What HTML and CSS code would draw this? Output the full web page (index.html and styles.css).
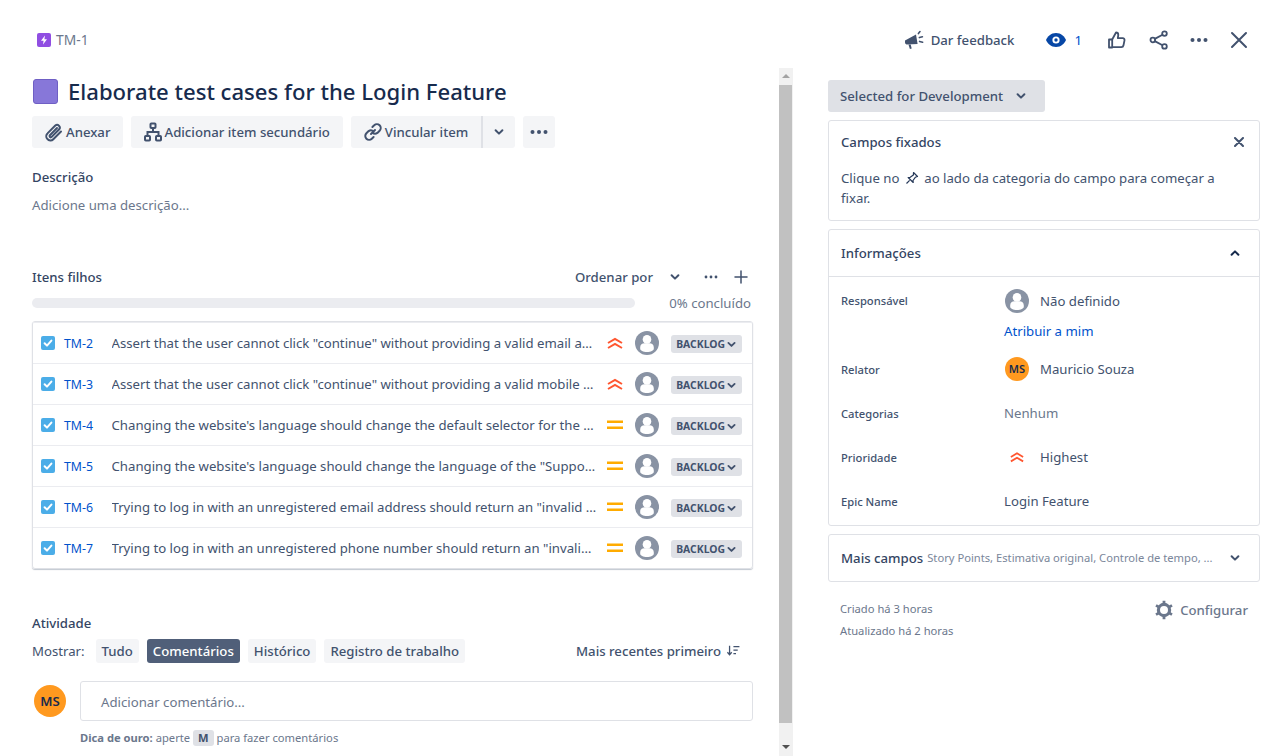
FILE: index.html
```html
<!DOCTYPE html>
<html lang="pt-BR">
<head>
<meta charset="utf-8">
<title>TM-1</title>
<link rel="stylesheet" href="styles.css">
</head>
<body>
<svg class="defs" width="0" height="0" aria-hidden="true">
  <defs>
    <symbol id="user" viewBox="0 0 24 24">
      <circle cx="12" cy="12" r="12" fill="#8993a4"/>
      <circle cx="12" cy="8.4" r="4.300" fill="#fff"/>
      <path d="M5.200 16.200c0-2.600 2-4 4.200-4h5.200c2.200 0 4.200 1.400 4.200 4v1.600c0 1.800-3 3.200-6.800 3.200s-6.800-1.400-6.800-3.200z" fill="#fff"/>
    </symbol>
    <symbol id="highest" viewBox="0 0 16 16">
      <path d="M1 8 8 3.800 15 8M1 13 8 8.800 15 13" fill="none" stroke="#ff5630" stroke-width="2"/>
    </symbol>
    <symbol id="medium" viewBox="0 0 16 16">
      <path d="M0 3.500h16v2.600H0zM0 9.500h16v2.600H0z" fill="#ffab00"/>
    </symbol>
    <symbol id="chev" viewBox="0 0 12 12">
      <path d="M2.600 4.200 6 7.600l3.400-3.400" fill="none" stroke="currentColor" stroke-width="2" stroke-linecap="round" stroke-linejoin="round"/>
    </symbol>
    <symbol id="check" viewBox="0 0 14 14">
      <rect width="14" height="14" rx="2" fill="#4bade8"/>
      <path d="m3.600 7.200 2.400 2.400 4.400-5" fill="none" stroke="#fff" stroke-width="2" stroke-linecap="round" stroke-linejoin="round"/>
    </symbol>
  </defs>
</svg>

<div class="app">
  <header class="topbar">
    <div class="crumb">
      <svg class="ico14" viewBox="0 0 14 14"><rect width="14" height="14" rx="2" fill="#904ee2"/><path d="M8 2.600 4 7.800h2.600L6 11.400l4-5.200H7.400z" fill="#fff"/></svg>
      <span>TM-1</span>
    </div>
    <div class="actions">
      <button class="act feedback">
        <svg class="ico22" viewBox="0 0 22 22"><path d="M2 11.500 13 5.500l1.600 9.600L3.600 15.400a1.900 1.900 0 0 1-1.600-1.900z" fill="#42526e"/><path d="m5.500 15.600 1.400 4.400 1.800-.6-1-3.800z" fill="#42526e"/><path d="M15.400 4.600 17 2.600M16.400 8.600l3-.8M16.600 12.400l3 .8" stroke="#42526e" stroke-width="1.600" stroke-linecap="round"/></svg>
        <span>Dar feedback</span>
      </button>
      <button class="act watch">
        <svg class="ico-eye" viewBox="0 0 20 14"><path d="M10 0c5 0 8.600 3.600 10 7-1.400 3.400-5 7-10 7S1.400 10.400 0 7c1.400-3.400 5-7 10-7z" fill="#0747a6"/><circle cx="10" cy="7" r="3.600" fill="#fff"/><circle cx="10" cy="7" r="1.700" fill="#0747a6"/></svg>
        <span>1</span>
      </button>
      <button class="act icon like">
        <svg class="ico22" viewBox="0 0 22 22" fill="none" stroke="#42526e" stroke-width="1.800" stroke-linejoin="round"><path d="M3 10.500h3.200v8H3z"/><path d="M6.200 10.500 10 3.500c1.600 0 2.300 1 2.300 2.400l-.5 3.300h5c1.200 0 1.900 1 1.700 2.100l-1 5c-.2 1.100-1 1.800-2.100 1.800H6.200"/></svg>
      </button>
      <button class="act icon">
        <svg class="ico22" viewBox="0 0 22 22" fill="none" stroke="#42526e" stroke-width="1.800"><circle cx="16.500" cy="4.600" r="2.300"/><circle cx="4.800" cy="11" r="2.300"/><circle cx="16.500" cy="17.400" r="2.300"/><path d="m6.800 9.900 7.700-4.200M6.800 12.100l7.700 4.200"/></svg>
      </button>
      <button class="act icon">
        <svg class="ico22" viewBox="0 0 22 22" fill="#42526e"><circle cx="4.500" cy="11" r="2"/><circle cx="11" cy="11" r="2"/><circle cx="17.500" cy="11" r="2"/></svg>
      </button>
      <button class="act icon">
        <svg class="ico22" viewBox="0 0 22 22" fill="none" stroke="#42526e" stroke-width="2" stroke-linecap="round"><path d="m4 4 14 14M18 4 4 18"/></svg>
      </button>
    </div>
  </header>

  <div class="main">
    <main class="left">
      <div class="title-row">
        <span class="epic"></span>
        <h1>Elaborate test cases for the Login Feature</h1>
      </div>
      <div class="toolbar">
        <button class="btn">
          <svg class="ico20" viewBox="0 0 20 20" fill="none" stroke="#42526e" stroke-width="2" stroke-linecap="round"><path d="M17 9.500 9.300 17.200a3.900 3.900 0 0 1-6-.3 3.900 3.900 0 0 1 .2-5.500l7.800-7.800a2.700 2.700 0 0 1 3.900 3.700l-7.500 7.600a1.200 1.200 0 0 1-1.800-1.700L13 6"/></svg>
          Anexar
        </button>
        <button class="btn wide">
          <svg class="ico20" viewBox="0 0 20 20" fill="none" stroke="#42526e" stroke-width="2"><rect x="7.500" y="1.500" width="5" height="4.500" rx=".8"/><rect x="2" y="14" width="5" height="4.500" rx=".8"/><rect x="13" y="14" width="5" height="4.500" rx=".8"/><path d="M10 6v4M4.500 14v-4h11v4"/></svg>
          Adicionar item secundário
        </button>
        <div class="split">
          <button class="btn seg-a">
            <svg class="ico20" viewBox="0 0 20 20" fill="none" stroke="#42526e" stroke-width="2" stroke-linecap="round"><path d="m8 12 4-4M9.400 5l1.800-1.700a3.800 3.800 0 0 1 5.400 5.400l-2.200 2.200a3.800 3.800 0 0 1-5-.4M10.600 15l-1.800 1.700a3.800 3.800 0 0 1-5.400-5.400l2.200-2.200a3.800 3.800 0 0 1 5 .4"/></svg>
            Vincular item
          </button>
          <button class="btn seg-b"><svg class="ico12" aria-hidden="true"><use href="#chev"/></svg></button>
        </div>
        <button class="btn more">
          <svg class="ico20" viewBox="0 0 20 20" fill="#42526e"><circle cx="3.500" cy="10" r="2"/><circle cx="10" cy="10" r="2"/><circle cx="16.500" cy="10" r="2"/></svg>
        </button>
      </div>

      <h2 class="label desc-label">Descrição</h2>
      <p class="placeholder">Adicione uma descrição...</p>

      <div class="child-head">
        <h2 class="label">Itens filhos</h2>
        <div class="child-tools">
          <span class="sort">Ordenar por</span>
          <svg class="ico12" aria-hidden="true"><use href="#chev"/></svg>
          <svg class="ico-dots" viewBox="0 0 14 4" fill="#42526e"><circle cx="2" cy="2" r="1.400"/><circle cx="7" cy="2" r="1.400"/><circle cx="12" cy="2" r="1.400"/></svg>
          <svg class="ico-plus" viewBox="0 0 14 14" stroke="#42526e" stroke-width="1.500" stroke-linecap="round"><path d="M7 1v12M1 7h12"/></svg>
        </div>
      </div>
      <div class="progress">
        <div class="bar"></div>
        <span>0% concluído</span>
      </div>

      <ul class="children">
        <li class="child">
          <svg class="ico14"><use href="#check"/></svg><a class="key">TM-2</a>
          <span class="summary">Assert that the user cannot click "continue" without providing a valid email address</span>
          <svg class="prio"><use href="#highest"/></svg><svg class="av"><use href="#user"/></svg>
          <span class="lozenge">BACKLOG<svg class="ico11"><use href="#chev"/></svg></span>
        </li>
        <li class="child">
          <svg class="ico14"><use href="#check"/></svg><a class="key">TM-3</a>
          <span class="summary">Assert that the user cannot click "continue" without providing a valid mobile phone number</span>
          <svg class="prio"><use href="#highest"/></svg><svg class="av"><use href="#user"/></svg>
          <span class="lozenge">BACKLOG<svg class="ico11"><use href="#chev"/></svg></span>
        </li>
        <li class="child">
          <svg class="ico14"><use href="#check"/></svg><a class="key">TM-4</a>
          <span class="summary">Changing the website's language should change the default selector for the phone prefix</span>
          <svg class="prio"><use href="#medium"/></svg><svg class="av"><use href="#user"/></svg>
          <span class="lozenge">BACKLOG<svg class="ico11"><use href="#chev"/></svg></span>
        </li>
        <li class="child">
          <svg class="ico14"><use href="#check"/></svg><a class="key">TM-5</a>
          <span class="summary">Changing the website's language should change the language of the "Support" page link</span>
          <svg class="prio"><use href="#medium"/></svg><svg class="av"><use href="#user"/></svg>
          <span class="lozenge">BACKLOG<svg class="ico11"><use href="#chev"/></svg></span>
        </li>
        <li class="child">
          <svg class="ico14"><use href="#check"/></svg><a class="key">TM-6</a>
          <span class="summary">Trying to log in with an unregistered email address should return an "invalid credentials" error</span>
          <svg class="prio"><use href="#medium"/></svg><svg class="av"><use href="#user"/></svg>
          <span class="lozenge">BACKLOG<svg class="ico11"><use href="#chev"/></svg></span>
        </li>
        <li class="child">
          <svg class="ico14"><use href="#check"/></svg><a class="key">TM-7</a>
          <span class="summary">Trying to log in with an unregistered phone number should return an "invalid credentials" error</span>
          <svg class="prio"><use href="#medium"/></svg><svg class="av"><use href="#user"/></svg>
          <span class="lozenge">BACKLOG<svg class="ico11"><use href="#chev"/></svg></span>
        </li>
      </ul>

      <h2 class="label activity">Atividade</h2>
      <div class="filter">
        <span class="show">Mostrar:</span>
        <button class="pill">Tudo</button>
        <button class="pill on">Comentários</button>
        <button class="pill">Histórico</button>
        <button class="pill">Registro de trabalho</button>
        <span class="recent">Mais recentes primeiro
          <svg class="ico-sort" viewBox="0 0 16 14" fill="none" stroke="#42526e" stroke-width="1.500"><path d="M4 1v10M1.500 8.500 4 11.500l2.500-3M8.500 2h7M8.500 6h5M8.500 10h3"/></svg>
        </span>
      </div>
      <div class="composer">
        <span class="ms big">MS</span>
        <div class="input">Adicionar comentário...</div>
      </div>
      <p class="hint"><b>Dica de ouro:</b> aperte <kbd>M</kbd> para fazer comentários</p>
    </main>

    <div class="scrollbar">
      <span class="arrow up"></span>
      <div class="thumb"></div>
      <span class="arrow down"></span>
    </div>

    <aside class="right">
      <button class="status">Selected for Development<svg class="ico12"><use href="#chev"/></svg></button>

      <section class="panel pinned">
        <div class="pinned-head">
          <h3>Campos fixados</h3>
          <svg class="ico-x" viewBox="0 0 10 10" stroke="#42526e" stroke-width="2" stroke-linecap="round"><path d="m1 1 8 8M9 1 1 9"/></svg>
        </div>
        <p>Clique no <svg class="ico-pin" viewBox="0 0 14 14" fill="none" stroke="#253858" stroke-width="1.200" stroke-linejoin="round"><path d="m8.500 1.500 4 4-2.200.8-2.300 3.200.2 2-5-5 2-.2 3.200-2.300zM4.600 9.400 1.500 12.500"/></svg> ao lado da categoria do campo para começar a fixar.</p>
      </section>

      <section class="panel info">
        <div class="info-head">
          <h3>Informações</h3>
          <svg class="ico12 flip"><use href="#chev"/></svg>
        </div>
        <dl class="fields">
          <dt class="f-resp">Responsável</dt>
          <dd class="f-resp"><div class="who"><svg class="av"><use href="#user"/></svg><span>Não definido</span></div><a class="assign">Atribuir a mim</a></dd>
          <dt class="f-row">Relator</dt>
          <dd class="f-row"><div class="who"><span class="ms">MS</span><span>Mauricio Souza</span></div></dd>
          <dt class="f-row">Categorias</dt>
          <dd class="f-row none">Nenhum</dd>
          <dt class="f-row">Prioridade</dt>
          <dd class="f-row"><div class="who"><span class="prio-slot"><svg class="prio-sm"><use href="#highest"/></svg></span><span>Highest</span></div></dd>
          <dt class="f-row">Epic Name</dt>
          <dd class="f-row">Login Feature</dd>
        </dl>
      </section>

      <section class="panel morefields">
        <h3>Mais campos</h3>
        <span class="more-list">Story Points, Estimativa original, Controle de tempo, ...</span>
        <svg class="ico12"><use href="#chev"/></svg>
      </section>

      <div class="meta">
        <div class="dates">
          <p>Criado há 3 horas</p>
          <p>Atualizado há 2 horas</p>
        </div>
        <button class="config">
          <svg class="ico20" viewBox="0 0 20 20" fill="none" stroke="#6b778c" stroke-width="3.200"><circle cx="10" cy="10" r="5.600"/><path stroke-width="2.800" d="M10 .8v3.400M10 15.800v3.400M2 5.400l3 1.700M15 12.900l3 1.700M2 14.600l3-1.700M15 7.100l3-1.700"/></svg>
          Configurar
        </button>
      </div>
    </aside>
  </div>
</div>
</body>
</html>
```
FILE: styles.css
```css
* { box-sizing: border-box; }
html, body { margin: 0; height: 100%; }
body {
  background: #fff;
  color: #172b4d;
  font: 13.2px/20px "Noto Sans", "Open Sans", sans-serif;
  overflow: hidden;
}
button { font: inherit; color: inherit; border: 0; background: none; padding: 0; white-space: nowrap; }
h1, h2, h3, p, ul, dl, dd { margin: 0; padding: 0; }
.defs { position: absolute; }
svg { display: block; flex: none; }

.app { height: 756px; display: flex; flex-direction: column; overflow: hidden; }

.topbar { height: 68px; flex: none; padding: 12px 30px 0 37px; display: flex; align-items: center; justify-content: space-between; }
.crumb { display: flex; align-items: center; gap: 5px; color: #6b778c; font-size: 13.800px; }
.actions { display: flex; align-items: center; color: #42526e; }
.act { display: flex; align-items: center; color: #42526e; }
.feedback { gap: 6px; margin-right: 32px; font-weight: 500; }
.watch { gap: 8px; color: #0747a6; margin-right: 24px; }
.watch span { color: #0052cc; }
.icon { margin-right: 18px; }
.icon.like { margin-right: 20px; }
.icon:last-child { margin-right: 0; }
.ico14 { width: 14px; height: 14px; }
.ico22 { width: 22px; height: 22px; }
.ico20 { width: 20px; height: 20px; }
.ico12 { width: 12px; height: 12px; }
.ico11 { width: 11px; height: 11px; }
.ico-eye { width: 20px; height: 14px; }
.ico-dots { width: 14px; height: 4px; }
.ico-plus { width: 14px; height: 14px; }
.ico-sort { width: 14px; height: 12px; }
.ico-x { width: 10px; height: 10px; }
.ico-pin { width: 14px; height: 14px; display: inline-block; vertical-align: -2px; margin: 0 2px; }
.flip { transform: rotate(180deg); }

.main { flex: 1; display: flex; min-height: 0; }
.left { width: 779px; flex: none; padding: 0 26px 0 32px; overflow: hidden; }

.title-row { display: flex; align-items: center; gap: 10px; height: 46px; margin-bottom: 2px; }
.epic { width: 25px; height: 25px; margin-left: 1px; background: #8777d9; border: 1px solid #6f5fc4; border-radius: 3px; flex: none; }
h1 { font-size: 22.100px; line-height: 32px; font-weight: 500; color: #172b4d; }

.toolbar { display: flex; gap: 8px; height: 32px; }
.btn { display: flex; align-items: center; height: 32px; gap: 2px; padding: 0 12px; background: #f4f5f7; border-radius: 3px; color: #42526e; font-weight: 500; }
.wide { padding-right: 13px; }
.split { display: flex; }
.seg-a { border-radius: 3px 0 0 3px; border-right: 2px solid #dfe1e6; padding-right: 12.500px; }
.seg-b { border-radius: 0 3px 3px 0; padding: 0 10px; }
.more { padding: 0 6px; }

.label { font-size: 13.200px; line-height: 20px; font-weight: 500; color: #344563; }
.desc-label { margin-top: 19px; }
.placeholder { margin-top: 8px; color: #6b778c; }

.child-head { display: flex; justify-content: space-between; align-items: center; margin-top: 52px; height: 20px; }
.child-tools { display: flex; align-items: center; color: #42526e; }
.sort { font-weight: 500; margin-right: 16px; }
.child-tools .ico-dots { margin-left: 23px; }
.child-tools .ico-plus { margin-left: 16px; margin-right: 5px; }

.progress { display: flex; align-items: center; justify-content: space-between; margin-top: 6px; height: 20px; padding-right: 2px; color: #6b778c; }
.bar { width: 603px; height: 10px; border-radius: 5px; background: #ebecf0; }

.children { list-style: none; margin-top: 8px; border: 1px solid #dfe1e6; border-radius: 3px; box-shadow: 0 1px 1px rgba(9,30,66,.25); }
.child { display: flex; align-items: center; height: 41px; padding: 0 10px 0 8px; border-top: 1px solid #ebecf0; }
.key { width: 47.500px; margin-left: 9px; margin-top: 1px; color: #0052cc; font-size: 12.300px; }
.summary { flex: 1; min-width: 0; white-space: nowrap; overflow: hidden; text-overflow: ellipsis; color: #42526e; }
.prio { width: 16px; height: 16px; margin-left: 10px; margin-right: 1px; }
.av { width: 24px; height: 24px; margin-left: 11px; }
.lozenge { display: flex; align-items: center; gap: 1px; height: 18px; margin-left: 12px; margin-top: 2px; padding: 1px 5px 0; background: #dfe1e6; border-radius: 3px; color: #42526e; font-size: 10.400px; font-weight: 700; line-height: 17px; }

.activity { margin-top: 44px; }
.filter { display: flex; align-items: center; margin-top: 6px; height: 24px; color: #42526e; }
.show { margin-right: 11px; }
.pill { height: 24px; margin-right: 8px; padding: 0 6px; background: #f4f5f7; border-radius: 3px; color: #42526e; font-weight: 500; }
.pill.on { background: #505f79; color: #fff; }
.recent { margin-left: auto; margin-right: 13px; display: flex; align-items: center; gap: 5px; font-weight: 500; }

.composer { display: flex; align-items: center; gap: 14px; margin-top: 18px; }
.ms { width: 24px; height: 24px; border-radius: 50%; background: #ff991f; color: #172b4d; font-size: 11px; font-weight: 600; display: flex; align-items: center; justify-content: center; flex: none; }
.ms.big { width: 32px; height: 32px; margin-left: 2px; font-size: 13.200px; }
.input { flex: 1; height: 40px; line-height: 40px; padding: 0 20px; border: 1px solid #dfe1e6; border-radius: 3px; color: #6b778c; }
.hint { margin: 7px 0 0 48px; font-size: 11.200px; line-height: 20px; color: #6b778c; }
.hint b { font-weight: 700; }
kbd { display: inline-block; font: 700 11.200px/16px "Noto Sans", sans-serif; background: #dfe1e6; border-radius: 3px; padding: 0 5px; color: #42526e; }

.scrollbar { width: 14px; flex: none; background: #f1f1f1; display: flex; flex-direction: column; align-items: stretch; }
.arrow { height: 17px; flex: none; position: relative; }
.arrow::after { content: ""; position: absolute; left: 3px; top: 6px; border: 4px solid transparent; }
.up::after { border-bottom-color: #a3a3a3; border-top: 0; }
.down::after { border-top-color: #505050; border-bottom: 0; }
.thumb { flex: 1; background: #c1c1c1; margin-right: 1px; margin-bottom: 16px; }

.right { width: 432px; margin-left: 35px; flex: none; padding-top: 12px; }
.status { display: flex; align-items: center; gap: 12px; height: 32px; width: 217px; padding: 0 12px; background: #dfe1e6; border-radius: 3px; color: #42526e; font-weight: 500; }
.panel { border: 1px solid #dfe1e6; border-radius: 3px; margin-top: 8px; }
h3 { font-size: 13.200px; line-height: 20px; font-weight: 500; color: #344563; white-space: nowrap; }
.pinned { height: 101px; padding: 11px 12px 0; color: #42526e; }
.pinned-head { display: flex; justify-content: space-between; align-items: center; padding-right: 3px; }
.pinned p { margin-top: 16px; padding-right: 30px; }
.info { height: 297px; }
.info-head { display: flex; justify-content: space-between; align-items: center; height: 47px; padding: 0 12px; border-bottom: 1px solid #dfe1e6; }
.info-head svg { margin-right: 6px; }
.fields { display: grid; grid-template-columns: 163px 1fr; padding: 0 12px; color: #42526e; }
dt { font-size: 11.200px; font-weight: 500; color: #42526e; display: flex; align-items: center; }
.f-resp { height: 70px; padding-top: 12px; }
dt.f-resp { align-items: flex-start; padding-top: 14px; }
.f-row { height: 44px; display: flex; align-items: center; }
dt.f-row { padding-top: 1px; }
.who { display: flex; align-items: center; gap: 11px; height: 24px; }
.who .av { margin-left: 1px; }
.who .ms { margin-left: 1px; }
.assign { display: block; color: #0052cc; margin-top: 8px; }
.none { color: #6b778c; }
.prio-slot { width: 25px; display: flex; justify-content: center; }
.prio-sm { width: 14px; height: 14px; }
.morefields { height: 48px; padding: 0 12px; display: flex; align-items: center; }
.more-list { flex: 1; margin-left: 4px; font-size: 11.200px; color: #7a869a; white-space: nowrap; }
.morefields svg { margin-right: 6px; color: #42526e; }
.meta { display: flex; justify-content: space-between; padding: 16px 12px 0; }
.dates { font-size: 11.200px; line-height: 22px; color: #6b778c; }
.config { display: flex; align-items: center; gap: 6px; height: 24px; color: #6b778c; font-weight: 500; }
```
